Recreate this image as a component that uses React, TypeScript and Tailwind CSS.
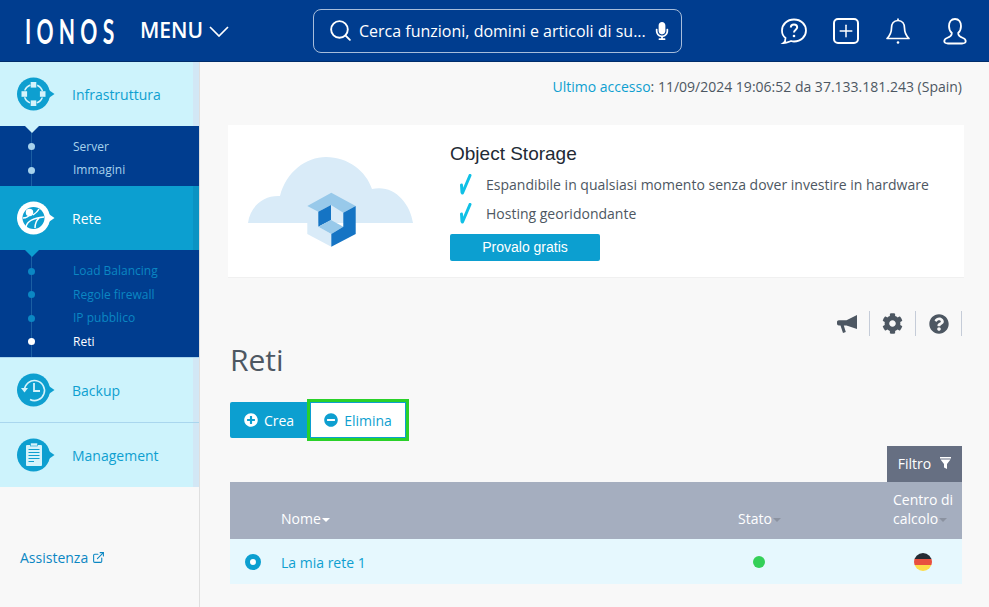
import { Search, Plus } from "lucide-react";
import { FaCog, FaQuestionCircle, FaPlusCircle, FaMinusCircle, FaMicrophone } from "react-icons/fa";
import { FiExternalLink } from "react-icons/fi";
import type { ReactNode } from "react";

function Bubble({ fill, children }: { fill: string; children: ReactNode }) {
  return (
    <svg width="38" height="34" viewBox="0 0 38 34" className="shrink-0">
      <circle cx="16.5" cy="17" r="16.5" fill={fill} />
      <path d="M31 12.5 L37.5 17 L31 21.5 Z" fill={fill} />
      {children}
    </svg>
  );
}

function InfraIcon() {
  return (
    <Bubble fill="#0e9fd0">
      <circle cx="16.5" cy="17" r="9.5" fill="none" stroke="#d6f3fb" strokeWidth="1.4" strokeDasharray="8 6.93" strokeDashoffset="-3.46" />
      <rect x="13.7" y="5" width="5.6" height="5.6" fill="#d6f3fb" />
      <rect x="13.7" y="23.4" width="5.6" height="5.6" fill="#d6f3fb" />
      <rect x="4.5" y="14.2" width="5.6" height="5.6" fill="#d6f3fb" />
      <rect x="22.9" y="14.2" width="5.6" height="5.6" fill="#d6f3fb" />
    </Bubble>
  );
}

function ReteIcon() {
  return (
    <Bubble fill="#ffffff">
      <circle cx="16.5" cy="17" r="11" fill="#0e9fd0" />
      <g fill="none" stroke="#ffffff" strokeWidth="1.5">
        <circle cx="12.5" cy="11.5" r="3" fill="#ffffff" />
        <path d="M6 17 C10 17 12 15 13 13" />
        <path d="M9 26 C10 20 16 17 27 16" />
        <path d="M18 27 C18 23 19 20 22 17" />
        <path d="M16 14 C19 12 21 10 22 8" />
      </g>
    </Bubble>
  );
}

function BackupIcon() {
  return (
    <Bubble fill="#0e9fd0">
      <path d="M7.5 17 A10 10 0 1 1 13 26.5" fill="none" stroke="#d6f3fb" strokeWidth="1.6" />
      <path d="M4 15 L11 15 L7.5 19.5 Z" fill="#d6f3fb" />
      <path d="M17 10 V18 H23" fill="none" stroke="#d6f3fb" strokeWidth="1.8" />
    </Bubble>
  );
}

function ManagementIcon() {
  return (
    <Bubble fill="#0e9fd0">
      <rect x="9" y="7" width="16" height="21" rx="1" fill="#d6f3fb" />
      <rect x="13.5" y="5" width="7" height="3" fill="#d6f3fb" stroke="#0e9fd0" strokeWidth="0.6" />
      <path d="M11.5 11.5 H22.5 M11.5 14.5 H22.5 M11.5 17.5 H22.5 M11.5 20.5 H22.5 M11.5 23.5 H17" stroke="#0e9fd0" strokeWidth="1.2" />
    </Bubble>
  );
}

function NavItem({ icon, label, active }: { icon: ReactNode; label: string; active?: boolean }) {
  return (
    <div
      className={`flex items-center h-16 pl-[17px] border-r-[6px] ${
        active ? "bg-[#0c9fd0] border-[#0b93c3] text-white" : "bg-[#cdf3fc] border-[#d2e7f5] text-[#0e9fd0]"
      }`}
    >
      <span className="w-[55px] shrink-0">{icon}</span>
      <span className="text-[14px] leading-none pt-[2px]">{label}</span>
    </div>
  );
}

function SubNav({ items, arrow, pt }: { items: { label: string; color: string; dot: string }[]; arrow: string; pt: string }) {
  return (
    <div className={`relative bg-[#003d8f] pb-[4px] ${pt}`}>
      <div className="absolute left-[31px] top-0 bottom-0 w-px bg-[#1b5fa3]" />
      <div
        className={`absolute left-[25px] top-0 w-0 h-0 border-x-[7px] border-x-transparent border-t-[7px] ${arrow}`}
      />
      {items.map((it) => (
        <div key={it.label} className="relative flex items-center h-[23.4px] text-[12px]">
          <span className={`ml-[28px] mr-[38px] w-[7px] h-[7px] rounded-full ${it.dot}`} />
          <span className={it.color}>{it.label}</span>
        </div>
      ))}
    </div>
  );
}

function Check() {
  return (
    <svg width="13" height="21" viewBox="0 0 13 21" className="shrink-0">
      <path d="M11 1.5 L3.5 19 M2.5 11 L3 18.5" stroke="#0fc0e6" strokeWidth="3" strokeLinecap="round" fill="none" />
    </svg>
  );
}

function CloudArt() {
  return (
    <svg width="166" height="91" viewBox="0 0 166 91" className="shrink-0">
      <path d="M0 66 C2 50 15 38 32 39 C38 15 58 0 78 0 C100 0 118 14 124 32 C145 27 162 45 165 66 Z" fill="#d9ebf8" />
      <polygon points="59.3,49 70.3,54.7 70.3,69.7 83.3,77 83.3,89.7 59.3,77" fill="#d9ebf8" />
      <polygon points="59.3,49 83.3,35.7 107.7,49 95.3,55.7 83,48 70.3,54.7" fill="#98c9ea" />
      <polygon points="70.3,54.7 83,48 83,63 70.3,69.7" fill="#1574c4" />
      <polygon points="70.3,69.7 83,63 95.3,69.7 83.3,77" fill="#98c9ea" />
      <polygon points="107.7,49 107.7,77 83.3,89.7 83.3,77 95.3,69.7 95.3,55.7" fill="#1574c4" />
    </svg>
  );
}

function Caret() {
  return <span className="inline-block ml-px align-middle w-0 h-0 border-x-[4px] border-x-transparent border-t-[4px] border-t-[#8b92a0]" />;
}

const infra = [
  { label: "Server", color: "text-[#a6d2ec]", dot: "bg-[#a6d2ec]" },
  { label: "Immagini", color: "text-[#a6d2ec]", dot: "bg-[#a6d2ec]" },
];
const rete = [
  { label: "Load Balancing", color: "text-[#0b87c3]", dot: "bg-[#0b87c3]" },
  { label: "Regole firewall", color: "text-[#0b87c3]", dot: "bg-[#0b87c3]" },
  { label: "IP pubblico", color: "text-[#0b87c3]", dot: "bg-[#0b87c3]" },
  { label: "Reti", color: "text-white", dot: "bg-white" },
];

export default function App() {
  return (
    <div className="h-[607px] w-[989px] overflow-hidden flex flex-col bg-[#f8f8f8] text-[#4d5762] font-['Open_Sans',sans-serif]">
      <header className="h-[62px] shrink-0 bg-[#003d8f] border-b border-[#002d6b] flex items-center text-white">
        <div className="w-[140px] pl-[25px]">
          <span className="block origin-left scale-x-[0.62] text-[34px] leading-none font-['Lato',sans-serif] font-bold tracking-[0.25em] whitespace-nowrap">IONOS</span>
        </div>
        <div className="flex items-center w-[173px] text-[21px] font-semibold">
          MENU
          <svg width="20" height="11" viewBox="0 0 20 11" fill="none" stroke="white" strokeWidth="1.7" className="ml-[6px] mt-[2px]">
            <path d="M1 1 L10 10 L19 1" />
          </svg>
        </div>
        <div className="w-[369px] h-[44px] rounded-lg border border-[#a7bddb] flex items-center pl-[14px] pr-[10px]">
          <Search size={25} strokeWidth={1.8} className="shrink-0" />
          <span className="ml-[6px] flex-1 text-[16px] whitespace-nowrap">Cerca funzioni, domini e articoli di su...</span>
          <FaMicrophone size={18} className="shrink-0" />
        </div>
        <div className="ml-auto flex items-center pr-[22px] gap-[24px]">
          <svg width="28" height="28" viewBox="0 0 28 28" fill="none" stroke="white" strokeWidth="1.8" className="mr-px">
            <path d="M14 2.5 C7 2.5 2 7.5 2 13.5 C2 17 3.5 19.5 5.5 21 C5.5 23 5 25 3.5 26 C7 26 9.5 24.5 11 24 C12 24.3 13 24.5 14 24.5 C21 24.5 26 19.5 26 13.5 C26 7.5 21 2.5 14 2.5 Z" />
            <path d="M10.8 10.5 C10.8 8.5 12.3 7.5 14 7.5 C15.8 7.5 17.2 8.6 17.2 10.3 C17.2 12.6 14 12.8 14 15.5" strokeWidth="2" />
            <circle cx="14" cy="19" r="1.3" fill="white" stroke="none" />
          </svg>
          <div className="w-[26px] h-[26px] rounded-[5px] border-2 border-white flex items-center justify-center">
            <Plus size={20} strokeWidth={1.8} />
          </div>
          <svg width="26" height="28" viewBox="0 0 26 28" fill="none" stroke="white" strokeWidth="1.7" className="ml-[2px]">
            <path d="M13 3.5 C8.5 3.5 6.5 7 6.5 11 C6.5 16 4.5 19 2 21.5 H24 C21.5 19 19.5 16 19.5 11 C19.5 7 17.5 3.5 13 3.5 Z" strokeLinejoin="round" />
            <path d="M13 3.5 V1.5" />
            <circle cx="13" cy="25.5" r="1.3" fill="white" stroke="none" />
          </svg>
          <svg width="24" height="28" viewBox="0 0 24 28" fill="none" stroke="white" strokeWidth="1.8" className="ml-[8px]">
            <path d="M12 2 C8 2 6 5 6 9 C6 12 7 14.5 8.8 16 C8.8 19 7 20 4 21 C2 21.7 1.2 23 1.3 24.5 C1.5 26 3 26.5 5 26.5 H19 C21 26.5 22.5 26 22.7 24.5 C22.8 23 22 21.7 20 21 C17 20 15.2 19 15.2 16 C17 14.5 18 12 18 9 C18 5 16 2 12 2 Z" />
          </svg>
        </div>
      </header>

      <div className="flex flex-1 min-h-0">
        <aside className="w-[200px] shrink-0 border-r border-[#dfdfdf] flex flex-col">
          <NavItem icon={<InfraIcon />} label="Infrastruttura" />
          <SubNav items={infra} arrow="border-t-[#cdf3fc]" pt="pt-[9px]" />
          <NavItem icon={<ReteIcon />} label="Rete" active />
          <SubNav items={rete} arrow="border-t-[#0c9fd0]" pt="pt-[10px]" />
          <div className="border-t border-[#a9d6ee]">
            <NavItem icon={<BackupIcon />} label="Backup" />
          </div>
          <div className="border-t border-[#a9d6ee]">
            <NavItem icon={<ManagementIcon />} label="Management" />
          </div>
          <div className="mt-[60px] pl-[20px] flex items-center text-[14px] text-[#0b87c3]">
            Assistenza
            <FiExternalLink size={13} className="ml-[4px]" />
          </div>
        </aside>

        <main className="flex-1 min-w-0 pl-[28px] pr-[25px]">
          <p className="mt-[15px] text-right text-[14px] leading-5 pr-[2px]">
            <span className="text-[#0e9fd0]">Ultimo accesso</span>: 11/09/2024 19:06:52 da 37.133.181.243 (Spain)
          </p>
          <section className="mt-[28px] h-[153px] bg-white border-b border-[#f0f0f0] flex pl-[20px]">
            <div className="pt-[32px] w-[202px] shrink-0">
              <CloudArt />
            </div>
            <div className="pt-[17px]">
              <h2 className="text-[19px] leading-[24px] text-[#222a35] font-['Liberation_Sans',sans-serif]">Object Storage</h2>
              <div className="ml-[9px] mt-[4px] flex items-center h-[29px] text-[14px] gap-[14px]">
                <Check />
                Espandibile in qualsiasi momento senza dover investire in hardware
              </div>
              <div className="ml-[9px] flex items-center h-[29px] text-[14px] gap-[14px]">
                <Check />
                Hosting georidondante
              </div>
              <button className="mt-[6px] w-[150px] h-[27px] rounded-[2px] bg-[#0c9fd0] text-white text-[14px] font-['Liberation_Sans',sans-serif]">
                Provalo gratis
              </button>
            </div>
          </section>

          <div className="mt-[33px] pr-[2px] flex justify-end items-center text-[#4d5762] h-[25px]">
            <svg width="20" height="18" viewBox="0 0 20 18" fill="currentColor" className="mr-[12px]">
              <path d="M0 7 C0 6 0.8 5.2 1.8 5.2 H9.5 L20 0 V14 L9.5 10.5 H6.8 L8.8 17 L6 18 L3.5 10.5 H1.8 C0.8 10.5 0 9.5 0 8.5 Z" />
            </svg>
            <span className="w-px h-[25px] bg-[#c5ccd8]" />
            <FaCog size={21} className="mx-[12px]" />
            <span className="w-px h-[25px] bg-[#c5ccd8]" />
            <FaQuestionCircle size={20} className="ml-[13px] mr-[12px]" />
            <span className="w-px h-[25px] bg-[#c5ccd8]" />
          </div>

          <h1 className="mt-[4px] pl-[2px] text-[30px] leading-[40px] font-normal">Reti</h1>

          <div className="mt-[22px] pl-[2px] flex items-center h-[36px]">
            <button className="h-[36px] w-[80px] rounded-[2px] bg-[#0c9fd0] text-white text-[14px] flex items-center justify-center gap-[6px] pr-[2px]">
              <FaPlusCircle size={14} />
              Crea
            </button>
            <button className="relative -ml-[3px] h-[42px] w-[102px] border-[3px] border-[#2ad12a] bg-transparent">
              <span className="h-full w-full bg-white border border-[#0c9fd0] text-[#0e9fd0] text-[14px] flex items-center justify-center gap-[6px]">
                <FaMinusCircle size={14} />
                Elimina
              </span>
            </button>
          </div>

          <div className="mx-[2px]">
            <div className="mt-[8px] flex justify-end">
              <div className="h-[36px] w-[75px] pb-[2px] bg-[#666f82] text-white text-[14px] flex items-center justify-center gap-[9px]">
                Filtro
                <svg width="11" height="12" viewBox="0 0 11 12" fill="white">
                  <path d="M0 0 H11 V1.5 H0 Z M0.5 2.5 H10.5 L7 7 V12 L4 10.5 V7 Z" />
                </svg>
              </div>
            </div>

            <div className="h-[57px] bg-[#a5aebf] text-white text-[14px] leading-[19px] flex items-end pb-[11px]">
              <div className="pl-[51px] flex-1">
                Nome
                <span className="inline-block ml-px align-middle w-0 h-0 border-x-[4px] border-x-transparent border-t-[4px] border-t-white" />
              </div>
              <div className="w-[155px]">
                Stato
                <Caret />
              </div>
              <div className="w-[69px]">
                Centro di
                <br />
                calcolo
                <Caret />
              </div>
            </div>
            <div className="h-[45px] bg-[#e6f8fe] flex items-center text-[14px] text-[#0e9fd0]">
              <span className="ml-[15px] w-4 h-4 rounded-full border-[5px] border-[#0c9fd0] bg-white shrink-0" />
              <span className="ml-[20px] flex-1 pt-[2px]">La mia rete 1</span>
              <span className="w-3 h-3 rounded-full bg-[#34d058] mr-[149px]" />
              <svg width="18" height="18" viewBox="0 0 18 18" className="mr-[30px]">
                <clipPath id="de">
                  <circle cx="9" cy="9" r="9" />
                </clipPath>
                <g clipPath="url(#de)">
                  <rect width="18" height="6" fill="#252b33" />
                  <rect y="6" width="18" height="6" fill="#e8503f" />
                  <rect y="12" width="18" height="6" fill="#fddc47" />
                </g>
              </svg>
            </div>
          </div>
        </main>
      </div>
    </div>
  );
}
